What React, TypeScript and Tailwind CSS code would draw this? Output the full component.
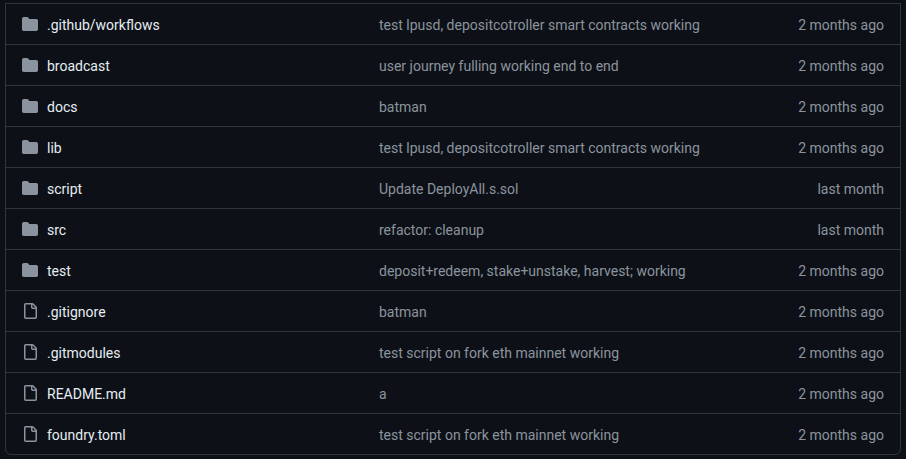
const rows: [string, string, string, string][] = [
  ["d", ".github/workflows", "test lpusd, depositcotroller smart contracts working", "2 months ago"],
  ["d", "broadcast", "user journey fulling working end to end", "2 months ago"],
  ["d", "docs", "batman", "2 months ago"],
  ["d", "lib", "test lpusd, depositcotroller smart contracts working", "2 months ago"],
  ["d", "script", "Update DeployAll.s.sol", "last month"],
  ["d", "src", "refactor: cleanup", "last month"],
  ["d", "test", "deposit+redeem, stake+unstake, harvest; working", "2 months ago"],
  ["f", ".gitignore", "batman", "2 months ago"],
  ["f", ".gitmodules", "test script on fork eth mainnet working", "2 months ago"],
  ["f", "README.md", "a", "2 months ago"],
  ["f", "foundry.toml", "test script on fork eth mainnet working", "2 months ago"],
];

function FolderIcon() {
  return (
    <svg width="16" height="16" viewBox="0 0 16 16" fill="#8b949e" aria-hidden="true">
      <path d="M1.75 1A1.75 1.75 0 0 0 0 2.75v10.5C0 14.216.784 15 1.75 15h12.5A1.75 1.75 0 0 0 16 13.25v-8.5A1.75 1.75 0 0 0 14.25 3H7.5a.25.25 0 0 1-.2-.1l-.9-1.2C6.07 1.26 5.55 1 5 1H1.75Z" />
    </svg>
  );
}

function FileIcon() {
  return (
    <svg width="16" height="16" viewBox="0 0 16 16" fill="#8b949e" aria-hidden="true">
      <path d="M2 1.75C2 .784 2.784 0 3.75 0h6.586c.464 0 .909.184 1.237.513l2.914 2.914c.329.328.513.773.513 1.237v9.586A1.75 1.75 0 0 1 13.25 16h-9.5A1.75 1.75 0 0 1 2 14.25Zm1.75-.25a.25.25 0 0 0-.25.25v12.5c0 .138.112.25.25.25h9.5a.25.25 0 0 0 .25-.25V6h-2.75A1.75 1.75 0 0 1 9 4.25V1.5Zm6.75.062V4.25c0 .138.112.25.25.25h2.688l-.011-.013-2.914-2.914-.013-.011Z" />
    </svg>
  );
}

export default function App() {
  return (
    <div className="h-[459px] w-[906px] overflow-hidden bg-[#0d1117] pt-[3px] pl-[5px] pr-[5px] font-['Roboto','Open_Sans',sans-serif] text-sm">
      <div className="rounded-b-md border border-[#30363d]">
        {rows.map(([kind, name, msg, time], i) => (
          <div
            key={name}
            className={`flex h-[40px] items-center ${i > 0 ? "box-content border-t border-[#30363d]" : ""}`}
          >
            <div className="flex w-[373px] shrink-0 items-center gap-[9px] pl-4">
              {kind === "d" ? <FolderIcon /> : <FileIcon />}
              <span className="pt-[2px] text-[#e6edf3]">{name}</span>
            </div>
            <span className="flex-1 pt-[2px] text-[#8b949e]">{msg}</span>
            <span className="pt-[2px] pr-4 text-[#8b949e]">{time}</span>
          </div>
        ))}
      </div>
    </div>
  );
}
